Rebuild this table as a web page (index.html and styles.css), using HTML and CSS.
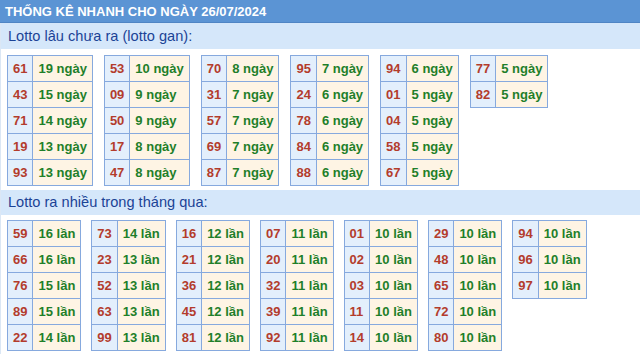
FILE: index.html
```html
<!DOCTYPE html>
<html lang="vi">
<head>
<meta charset="utf-8">
<title>Thống kê nhanh</title>
<link rel="stylesheet" href="styles.css">
</head>
<body>
<div class="box">
  <div class="title">THỐNG KÊ NHANH CHO NGÀY 26/07/2024</div>
  <div class="sub">Lotto lâu chưa ra (lotto gan):</div>
  <div class="tables">
    <table class="lt"><tr><td class="n">61</td><td class="c">19 ngày</td></tr><tr><td class="n">43</td><td class="c">15 ngày</td></tr><tr><td class="n">71</td><td class="c">14 ngày</td></tr><tr><td class="n">19</td><td class="c">13 ngày</td></tr><tr><td class="n">93</td><td class="c">13 ngày</td></tr></table>
    <table class="lt"><tr><td class="n">53</td><td class="c">10 ngày</td></tr><tr><td class="n">09</td><td class="c">9 ngày</td></tr><tr><td class="n">50</td><td class="c">9 ngày</td></tr><tr><td class="n">17</td><td class="c">8 ngày</td></tr><tr><td class="n">47</td><td class="c">8 ngày</td></tr></table>
    <table class="lt"><tr><td class="n">70</td><td class="c">8 ngày</td></tr><tr><td class="n">31</td><td class="c">7 ngày</td></tr><tr><td class="n">57</td><td class="c">7 ngày</td></tr><tr><td class="n">69</td><td class="c">7 ngày</td></tr><tr><td class="n">87</td><td class="c">7 ngày</td></tr></table>
    <table class="lt"><tr><td class="n">95</td><td class="c">7 ngày</td></tr><tr><td class="n">24</td><td class="c">6 ngày</td></tr><tr><td class="n">78</td><td class="c">6 ngày</td></tr><tr><td class="n">84</td><td class="c">6 ngày</td></tr><tr><td class="n">88</td><td class="c">6 ngày</td></tr></table>
    <table class="lt"><tr><td class="n">94</td><td class="c">6 ngày</td></tr><tr><td class="n">01</td><td class="c">5 ngày</td></tr><tr><td class="n">04</td><td class="c">5 ngày</td></tr><tr><td class="n">58</td><td class="c">5 ngày</td></tr><tr><td class="n">67</td><td class="c">5 ngày</td></tr></table>
    <table class="lt"><tr><td class="n">77</td><td class="c">5 ngày</td></tr><tr><td class="n">82</td><td class="c">5 ngày</td></tr></table>
  </div>
  <div class="sub sub2">Lotto ra nhiều trong tháng qua:</div>
  <div class="tables tables2">
    <table class="lt"><tr><td class="n">59</td><td class="c">16 lần</td></tr><tr><td class="n">66</td><td class="c">16 lần</td></tr><tr><td class="n">76</td><td class="c">15 lần</td></tr><tr><td class="n">89</td><td class="c">15 lần</td></tr><tr><td class="n">22</td><td class="c">14 lần</td></tr></table>
    <table class="lt"><tr><td class="n">73</td><td class="c">14 lần</td></tr><tr><td class="n">23</td><td class="c">13 lần</td></tr><tr><td class="n">52</td><td class="c">13 lần</td></tr><tr><td class="n">63</td><td class="c">13 lần</td></tr><tr><td class="n">99</td><td class="c">13 lần</td></tr></table>
    <table class="lt"><tr><td class="n">16</td><td class="c">12 lần</td></tr><tr><td class="n">21</td><td class="c">12 lần</td></tr><tr><td class="n">36</td><td class="c">12 lần</td></tr><tr><td class="n">45</td><td class="c">12 lần</td></tr><tr><td class="n">81</td><td class="c">12 lần</td></tr></table>
    <table class="lt"><tr><td class="n">07</td><td class="c">11 lần</td></tr><tr><td class="n">20</td><td class="c">11 lần</td></tr><tr><td class="n">32</td><td class="c">11 lần</td></tr><tr><td class="n">39</td><td class="c">11 lần</td></tr><tr><td class="n">92</td><td class="c">11 lần</td></tr></table>
    <table class="lt"><tr><td class="n">01</td><td class="c">10 lần</td></tr><tr><td class="n">02</td><td class="c">10 lần</td></tr><tr><td class="n">03</td><td class="c">10 lần</td></tr><tr><td class="n">11</td><td class="c">10 lần</td></tr><tr><td class="n">14</td><td class="c">10 lần</td></tr></table>
    <table class="lt"><tr><td class="n">29</td><td class="c">10 lần</td></tr><tr><td class="n">48</td><td class="c">10 lần</td></tr><tr><td class="n">65</td><td class="c">10 lần</td></tr><tr><td class="n">72</td><td class="c">10 lần</td></tr><tr><td class="n">80</td><td class="c">10 lần</td></tr></table>
    <table class="lt"><tr><td class="n">94</td><td class="c">10 lần</td></tr><tr><td class="n">96</td><td class="c">10 lần</td></tr><tr><td class="n">97</td><td class="c">10 lần</td></tr></table>
  </div>
</div>
</body>
</html>
```
FILE: styles.css
```css
html, body {
  margin: 0;
  padding: 0;
  background: #ffffff;
}
.box {
  font-family: "Liberation Sans", Arial, sans-serif;
  border-left: 1px solid #dbe7f5;
  min-height: 354px;
  box-sizing: border-box;
}
.title {
  height: 22px;
  line-height: 23px;
  background: #5b94d4;
  border-bottom: 1px solid #4f85c4;
  color: #ffffff;
  font-size: 13px;
  font-weight: bold;
  padding-left: 5px;
  margin-left: -1px;
}
.sub {
  height: 26px;
  line-height: 26px;
  background: #d5e7fa;
  color: #1b4396;
  font-size: 14.6px;
  padding-left: 7px;
}
.sub2 {
  height: 25px;
  line-height: 25px;
}
.tables {
  display: flex;
  align-items: flex-start;
  gap: 11px;
  padding: 6px 0 4px 6px;
}
.tables2 {
  gap: 10px;
  padding-top: 5px;
}
.lt {
  border-collapse: collapse;
  font-size: 13px;
  font-weight: bold;
}
.lt td {
  border: 1px solid #86a9de;
  height: 26px;
  padding: 0 5px;
  box-sizing: border-box;
  white-space: nowrap;
}
.lt .n {
  background: #e3effc;
  color: #b33c2c;
}
.lt .c {
  background: #fef4e4;
  color: #1f7f2a;
}
```
